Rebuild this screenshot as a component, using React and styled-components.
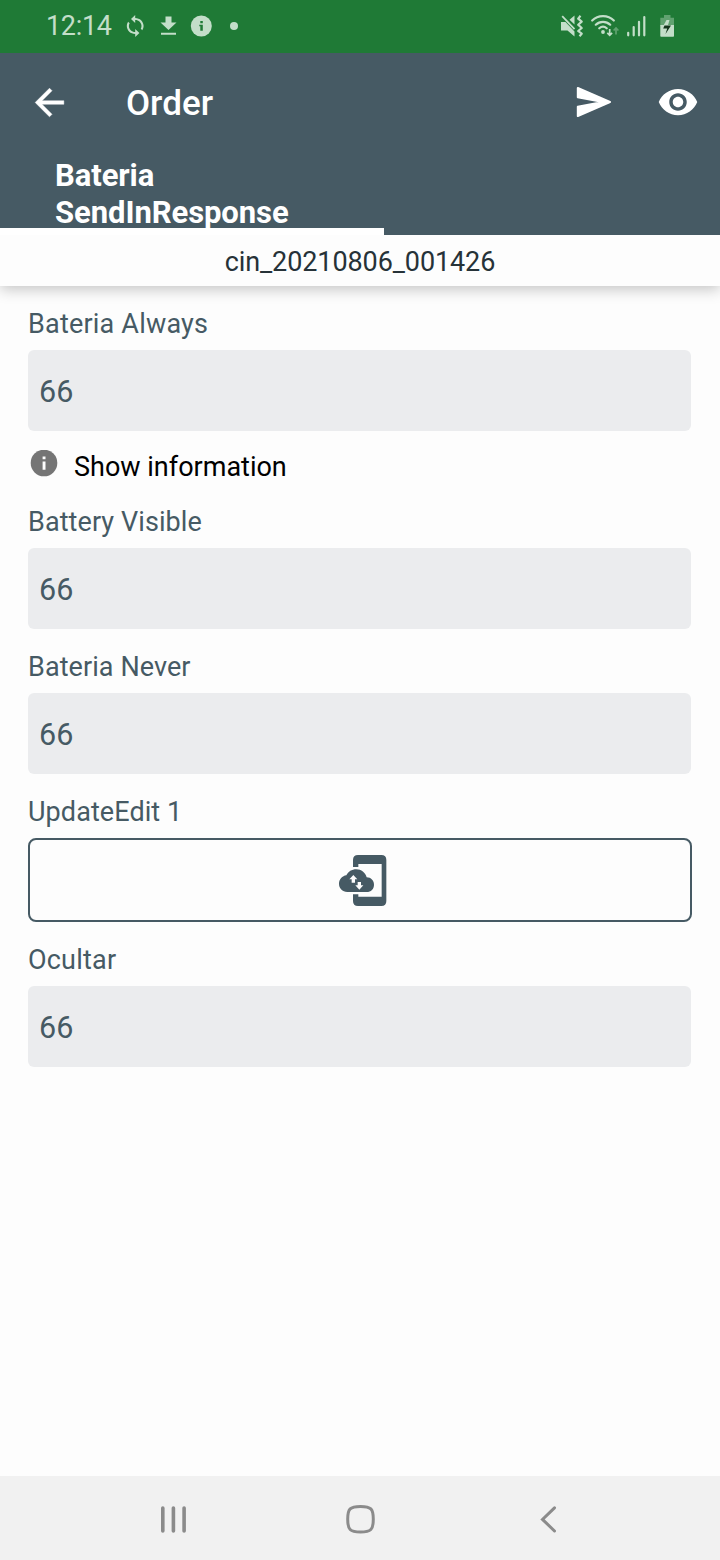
import React from "react";
import styled, { createGlobalStyle } from "styled-components";

const slate = "#465a64";
const mint = "#c3dec9";

const GlobalStyle = createGlobalStyle`
  * { box-sizing: border-box; }
  body {
    margin: 0;
    background: #fdfdfd;
    font-family: Roboto, "Liberation Sans", sans-serif;
  }
  svg { display: block; flex: none; }
`;

const Screen = styled.div`
  display: flex;
  flex-direction: column;
  width: 720px;
  height: 1560px;
  overflow: hidden;
  background: #fdfdfd;
`;

const StatusBar = styled.div`
  display: flex;
  align-items: center;
  justify-content: space-between;
  flex: none;
  height: 53px;
  padding: 0 45px 2px 46px;
  background: #1f7a36;
  color: ${mint};
`;

const StatusGroup = styled.div`
  display: flex;
  align-items: center;
  gap: ${(p) => p.$gap}px;
`;

const Clock = styled.span`
  width: 68px;
  font-size: 27px;
  line-height: 32px;
  letter-spacing: -0.3px;
  white-space: nowrap;
`;

const Header = styled.header`
  display: flex;
  flex-direction: column;
  flex: none;
  height: 182px;
  background: ${slate};
  color: #fff;
`;

const Toolbar = styled.div`
  display: flex;
  align-items: center;
  height: 98px;
  padding: 0 21px 0 28px;
`;

const IconButton = styled.button`
  display: flex;
  margin: 0;
  padding: 0;
  border: 0;
  background: none;
  color: inherit;
`;

const Title = styled.h1`
  flex: 1;
  margin: 0;
  padding: 4px 0 0 55px;
  font-size: 35px;
  font-weight: 500;
  line-height: 42px;
`;

const Actions = styled.div`
  display: flex;
  align-items: center;
  gap: 45px;
`;

const Tab = styled.div`
  width: 384px;
  height: 84px;
  padding: 6px 40px 0 55px;
  border-bottom: 7px solid #fff;
  overflow: hidden;
  font-size: 31px;
  font-weight: 700;
  line-height: 37px;
  letter-spacing: -0.07px;
`;

const RecordBar = styled.div`
  flex: none;
  height: 51px;
  background: #fdfdfd;
  box-shadow: 0 3px 14px rgba(0, 0, 0, 0.24);
  clip-path: inset(0 0 -30px 0);
  color: #263238;
  font-size: 27px;
  line-height: 55px;
  letter-spacing: -0.1px;
  text-align: center;
`;

const Form = styled.main`
  flex: 1;
  padding: 0 28px;
`;

const Field = styled.section`
  padding-top: 22px;
`;

const Label = styled.div`
  height: 42px;
  color: ${slate};
  font-size: 27px;
  line-height: 32px;
  letter-spacing: ${(p) => p.$spacing ?? 0.08}px;
`;

const Value = styled.div`
  width: 663px;
  height: 81px;
  padding-left: 11px;
  border-radius: 6px;
  background: #ebecee;
  color: ${slate};
  font-size: 30.5px;
  line-height: 84px;
`;

const SyncButton = styled.button`
  display: flex;
  align-items: center;
  justify-content: center;
  width: 664px;
  height: 84px;
  padding: 1px 0 0 5px;
  border: 2px solid ${slate};
  border-radius: 8px;
  background: #fdfdfd;
  color: ${slate};
`;

const InfoRow = styled.div`
  display: flex;
  align-items: flex-start;
  height: 53px;
  padding: 19px 0 0 2px;
  gap: 16px;
  color: #000;
  font-size: 27px;
  line-height: 34px;
`;

const NavBar = styled.nav`
  display: flex;
  align-items: center;
  justify-content: space-between;
  flex: none;
  height: 84px;
  padding: 2px 158px 0 160px;
  background: #f1f1f1;
  color: #8b8b8b;
`;

const SyncIcon = () => (
  <svg width="24" height="24" viewBox="0 0 24 24" fill="currentColor">
    <path
      d="M12 4V1L8 5l4 4V6c3.31 0 6 2.69 6 6 0 1.01-.25 1.97-.7 2.8l1.46 1.46A7.93 7.93 0 0 0 20 12c0-4.42-3.58-8-8-8zm0 14c-3.31 0-6-2.69-6-6 0-1.01.25-1.97.7-2.8L5.24 7.74A7.93 7.93 0 0 0 4 12c0 4.42 3.58 8 8 8v3l4-4-4-4v3z"
      transform="translate(-0.4 0) scale(1.05 1)"
    />
  </svg>
);

const DownloadIcon = () => (
  <svg width="24" height="24" viewBox="0 0 24 24" fill="currentColor">
    <path d="M9.500 2.500h6v6h5L12.500 16l-8-7.500h5zM5 18.700h15v2H5z" />
  </svg>
);

const StatusInfoIcon = () => (
  <svg width="24" height="24" viewBox="0 0 24 24">
    <circle cx="12.300" cy="12" r="10.500" fill="currentColor" />
    <path d="M11.300 7h2.500v2.300h-2.500zM10.300 10.700h3.500v6h-2.500v-4.500h-1z" fill="#1f7a36" />
  </svg>
);

const DotIcon = () => (
  <svg width="24" height="24" viewBox="0 0 24 24">
    <circle cx="12" cy="12" r="4" fill="currentColor" />
  </svg>
);

const MuteVibrateIcon = () => (
  <svg width="22" height="22" viewBox="0 0 22 22">
    <path d="M0 7h4.500l9 9.500V21.500L6.500 15.500H0zM8.500 4.800l5-4.300v9z" fill="currentColor" />
    <path d="M1.200 1.200l12.300 13" stroke="currentColor" strokeWidth="1.800" />
    <path
      d="M19.500.8l-2.300 2.800 3.500 3-3.500 3.200 3.500 3.200-3.500 3 3.500 2.700-2.200 2.500"
      fill="none"
      stroke="currentColor"
      strokeWidth="2.200"
      strokeLinejoin="round"
    />
  </svg>
);

const WifiIcon = () => (
  <svg width="28" height="22" viewBox="0 0 28 22" fill="none" stroke="currentColor" strokeLinecap="round">
    <path d="M1.200 5.500C7-.3 17-.3 22.800 5.500M4.800 9.700c4-3.800 10.400-3.800 14.400 0M8.300 13.300c2.200-2 5.200-2 7.400 0" strokeWidth="2.200" />
    <circle cx="12" cy="17" r="1.900" fill="currentColor" stroke="none" />
    <path d="M18.700 14v6M16.300 17.800l2.400 2.500 2.400-2.500" strokeWidth="1.700" strokeLinecap="butt" />
    <path d="M25 19.500v-6M22.600 15.500l2.400-2.500 2.400 2.500" strokeWidth="1.700" strokeLinecap="butt" opacity="0.4" />
  </svg>
);

const SignalIcon = () => (
  <svg width="19" height="22" viewBox="0 0 19 22" stroke="currentColor" strokeWidth="2.200" strokeLinecap="round">
    <path d="M1.200 17.800v2.500M6.700 12v8.300M12 6.800v13.500M17.300 2v18.300" />
  </svg>
);

const BatteryIcon = () => (
  <svg width="21" height="22" viewBox="-6 0 21 22">
    <path d="M4 0h6.500v2.700H14v8H.3v-8H4z" fill="currentColor" opacity="0.4" />
    <path d="M.3 10h13.700v11q0 .8-.8.8H1.100q-.8 0-.8-.8z" fill="currentColor" />
    <path d="M6.500 5h3L8 10H3.800z" fill="currentColor" />
    <path d="M4.500 10.500H11L5.500 19l1.700-5.500H3.200z" fill="#14361d" />
  </svg>
);

const BackArrowIcon = () => (
  <svg width="43" height="43" viewBox="0 0 24 24" fill="currentColor">
    <path
      d="M20 11H7.830l5.590-5.590L12 4l-8 8 8 8 1.410-1.410L7.830 13H20v-2z"
      stroke="currentColor"
      strokeWidth="0.250"
    />
  </svg>
);

const SendIcon = () => (
  <svg width="36" height="32" viewBox="0 0 36 32">
    <path
      d="M1.800 2L34 16 1.800 30V20.700L27 16 1.800 11.300z"
      fill="currentColor"
      stroke="currentColor"
      strokeWidth="2"
      strokeLinejoin="round"
    />
  </svg>
);

const EyeIcon = () => (
  <svg width="42" height="42" viewBox="0 0 24 24" fill="currentColor">
    <path d="M12 4.500C7 4.500 2.730 7.610 1 12c1.730 4.390 6 7.500 11 7.500s9.270-3.110 11-7.500c-1.730-4.390-6-7.500-11-7.500zM12 17c-2.760 0-5-2.240-5-5s2.240-5 5-5 5 2.240 5 5-2.240 5-5 5zm0-8c-1.660 0-3 1.340-3 3s1.340 3 3 3 3-1.340 3-3-1.340-3-3-3z" />
  </svg>
);

const InfoIcon = () => (
  <svg width="28" height="28" viewBox="0 0 28 28">
    <circle cx="14" cy="13" r="13.300" fill="#757575" />
    <path d="M12.600 6.500h2.900v2.700h-2.900zM12.600 11.500h2.900v8.300h-2.900z" fill="#fdfdfd" />
  </svg>
);

const PhoneCloudIcon = () => (
  <svg width="48" height="51" viewBox="0 0 144 153" fill="currentColor">
    <path d="M42 36V15Q42 0 57 0H127Q142 0 142 15V138Q142 153 127 153H57Q42 153 42 138V118H58V125H128V27H58V36z" />
    <path d="M25 111C10 111 0 100 0 86.500 0 73 10 63 22 61 28 50 38 43 52 43 67 43 79 53 83 67 96 67 105 77 105 89 105 102 96 111 83 111z" />
    <path d="M43 60l12 13h-7v10H38V73h-7zM61 104l-12-13h7V81h10v10h7z" fill="#fdfdfd" />
  </svg>
);

const RecentsIcon = () => (
  <svg width="28" height="28" viewBox="0 0 28 28" stroke="currentColor" strokeWidth="3.600" strokeLinecap="round">
    <path d="M2.800 3v23M13.400 3v23M24.100 3v23" />
  </svg>
);

const HomeIcon = () => (
  <svg width="30" height="30" viewBox="0 0 30 30" fill="none" stroke="currentColor" strokeWidth="3">
    <path d="M14.500 2.400C25 2.400 27.300 4.700 27.300 15.200S25 28 14.500 28 1.700 25.700 1.700 15.200 4 2.400 14.500 2.400z" />
  </svg>
);

const NavBackIcon = () => (
  <svg
    width="28"
    height="28"
    viewBox="-5.5 0 28 28"
    fill="none"
    stroke="currentColor"
    strokeWidth="3"
    strokeLinecap="round"
  >
    <path d="M15 2.800L3 14.400l12 11.600" />
  </svg>
);

const ReadOnlyField = ({ label, value, spacing }) => (
  <Field>
    <Label $spacing={spacing}>{label}</Label>
    <Value>{value}</Value>
  </Field>
);

export default function App() {
  return (
    <>
      <GlobalStyle />
      <Screen>
        <StatusBar>
          <StatusGroup $gap={9}>
            <Clock>12:14</Clock>
            <SyncIcon />
            <DownloadIcon />
            <StatusInfoIcon />
            <DotIcon />
          </StatusGroup>
          <StatusGroup $gap={8}>
            <MuteVibrateIcon />
            <WifiIcon />
            <SignalIcon />
            <BatteryIcon />
          </StatusGroup>
        </StatusBar>
        <Header>
          <Toolbar>
            <IconButton aria-label="Back">
              <BackArrowIcon />
            </IconButton>
            <Title>Order</Title>
            <Actions>
              <IconButton aria-label="Send">
                <SendIcon />
              </IconButton>
              <IconButton aria-label="Preview">
                <EyeIcon />
              </IconButton>
            </Actions>
          </Toolbar>
          <Tab>Bateria SendInResponse</Tab>
        </Header>
        <RecordBar>cin_20210806_001426</RecordBar>
        <Form>
          <ReadOnlyField label="Bateria Always" value="66" spacing={0.2} />
          <InfoRow>
            <InfoIcon />
            <span>Show information</span>
          </InfoRow>
          <ReadOnlyField label="Battery Visible" value="66" />
          <ReadOnlyField label="Bateria Never" value="66" />
          <Field>
            <Label>UpdateEdit 1</Label>
            <SyncButton aria-label="Update">
              <PhoneCloudIcon />
            </SyncButton>
          </Field>
          <ReadOnlyField label="Ocultar" value="66" spacing={0.2} />
        </Form>
        <NavBar>
          <RecentsIcon />
          <HomeIcon />
          <NavBackIcon />
        </NavBar>
      </Screen>
    </>
  );
}
